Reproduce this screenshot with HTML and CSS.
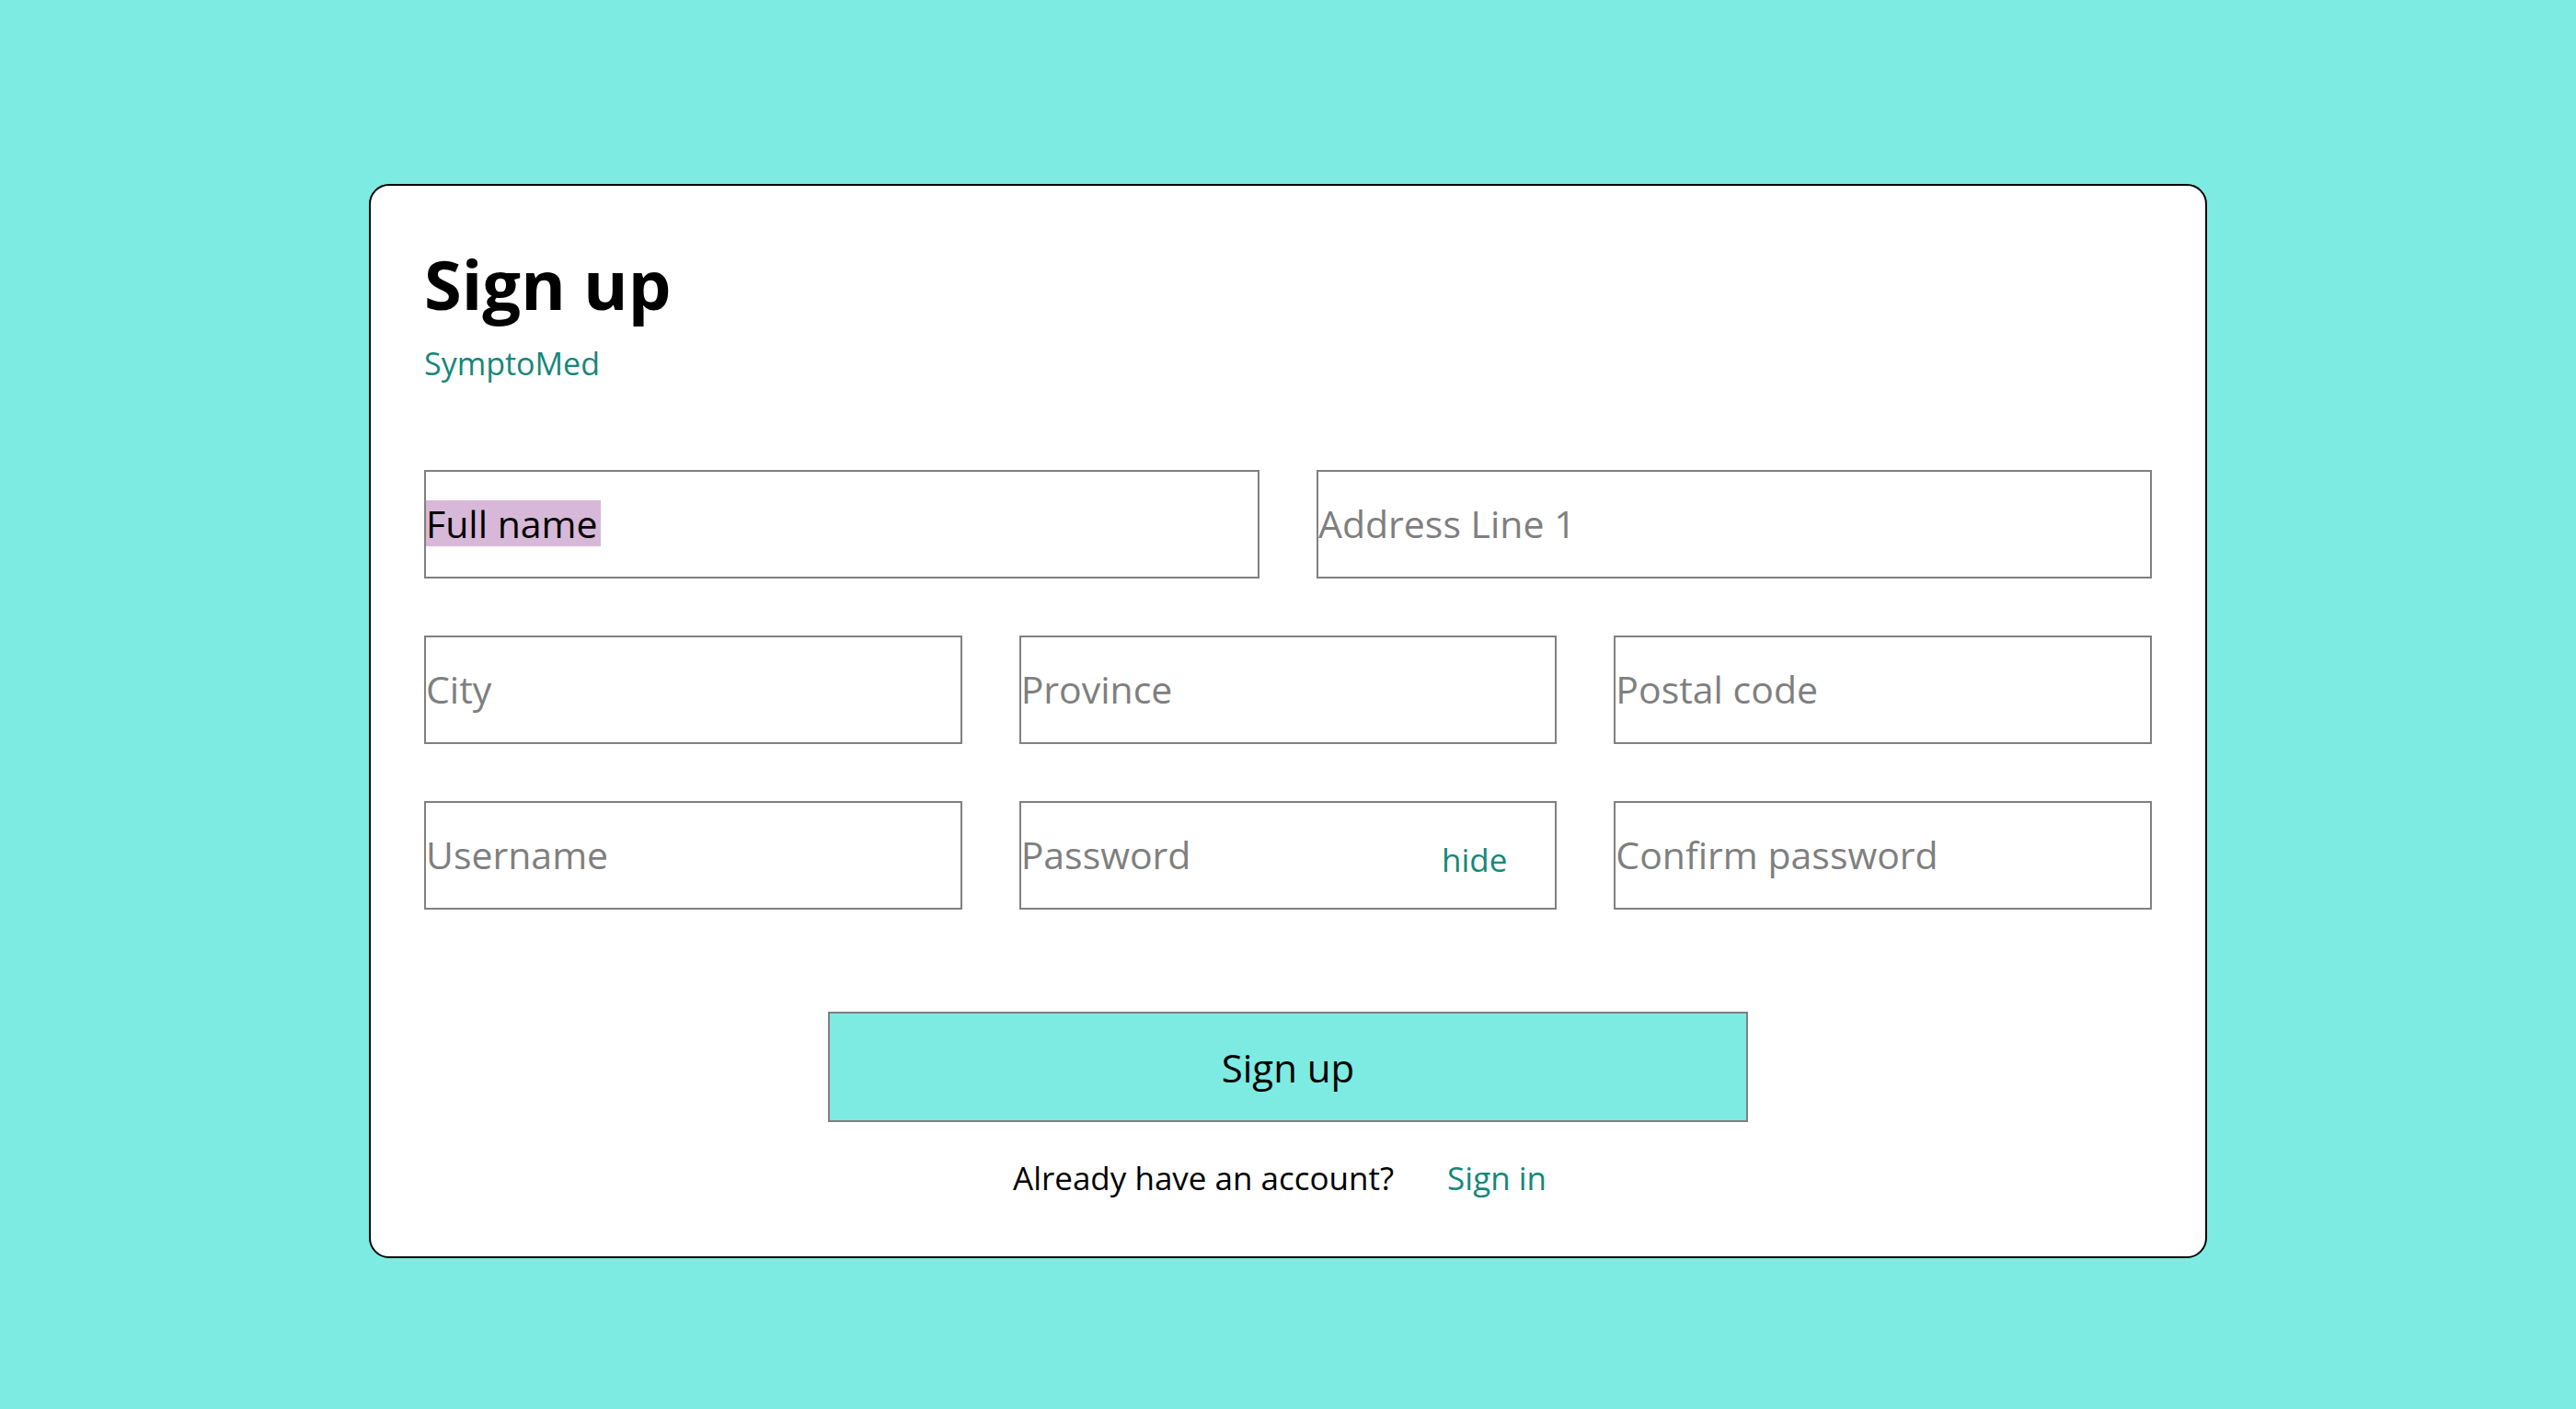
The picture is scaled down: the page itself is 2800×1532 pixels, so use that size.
FILE: index.html
```html
<!DOCTYPE html>
<html lang="en">
<head>
<meta charset="utf-8">
<title>Sign up - SymptoMed</title>
<link rel="stylesheet" href="styles.css">
</head>
<body>
<main class="card">
  <h1 class="title">Sign up</h1>
  <p class="brand">SymptoMed</p>
  <form class="form">
    <div class="grid">
      <div class="field span3"><span class="hl">Full name</span></div>
      <div class="field span3"><span class="ph">Address Line 1</span></div>
      <div class="field span2"><span class="ph">City</span></div>
      <div class="field span2"><span class="ph">Province</span></div>
      <div class="field span2"><span class="ph">Postal code</span></div>
      <div class="field span2"><span class="ph">Username</span></div>
      <div class="field span2 pw"><span class="ph">Password</span><span class="hide">hide</span></div>
      <div class="field span2"><span class="ph">Confirm password</span></div>
    </div>
    <div class="actions">
      <button type="button" class="btn">Sign up</button>
    </div>
    <p class="footer"><span>Already have an account?</span><a class="link" href="#">Sign in</a></p>
  </form>
</main>
</body>
</html>
```

FILE: styles.css
```css
* { box-sizing: border-box; }
html, body { margin: 0; padding: 0; }
body {
  background: #7debe1;
  font-family: "Open Sans", "Noto Sans", sans-serif;
  width: 2800px;
  height: 1532px;
  overflow: hidden;
}
.card {
  width: 1998px;
  margin: 200px auto 0;
  background: #ffffff;
  border: 2px solid #000000;
  border-radius: 22px;
  padding: 56px 58px 62px 58px;
}
.title {
  margin: 0;
  font-size: 74px;
  font-weight: 700;
  color: #000;
  line-height: normal;
}
.brand {
  margin: 13px 0 0;
  font-size: 34px;
  color: #16877a;
  line-height: normal;
}
.form { margin: 93px 0 0; }
.grid {
  display: grid;
  grid-template-columns: repeat(6, 1fr);
  column-gap: 62px;
  row-gap: 62px;
}
.span3 { grid-column: span 3; }
.span2 { grid-column: span 2; }
.field {
  height: 118px;
  border: 2px solid #808080;
  display: flex;
  align-items: center;
  font-size: 41px;
  padding-bottom: 2px;
  overflow: hidden;
}
.ph { color: #7f7f7f; }
.hl {
  background: #d8b8d8;
  color: #000;
  padding: 0 3px 0 0;
  line-height: 50px;
}
.pw { justify-content: space-between; }
.hide {
  color: #16877a;
  font-size: 35px;
  margin-right: 52px;
  padding-top: 10px;
}
.actions {
  display: flex;
  justify-content: center;
  margin-top: 111px;
}
.btn {
  width: 1000px;
  height: 120px;
  background: #7debe1;
  border: 2px solid #808080;
  font-family: inherit;
  font-size: 42px;
  color: #000;
  cursor: pointer;
  padding: 0;
}
.footer {
  margin: 37px 0 0;
  padding-right: 18px;
  display: flex;
  justify-content: center;
  gap: 58px;
  font-size: 35px;
  color: #000;
  line-height: normal;
}
.link {
  color: #16877a;
  text-decoration: none;
}
```
